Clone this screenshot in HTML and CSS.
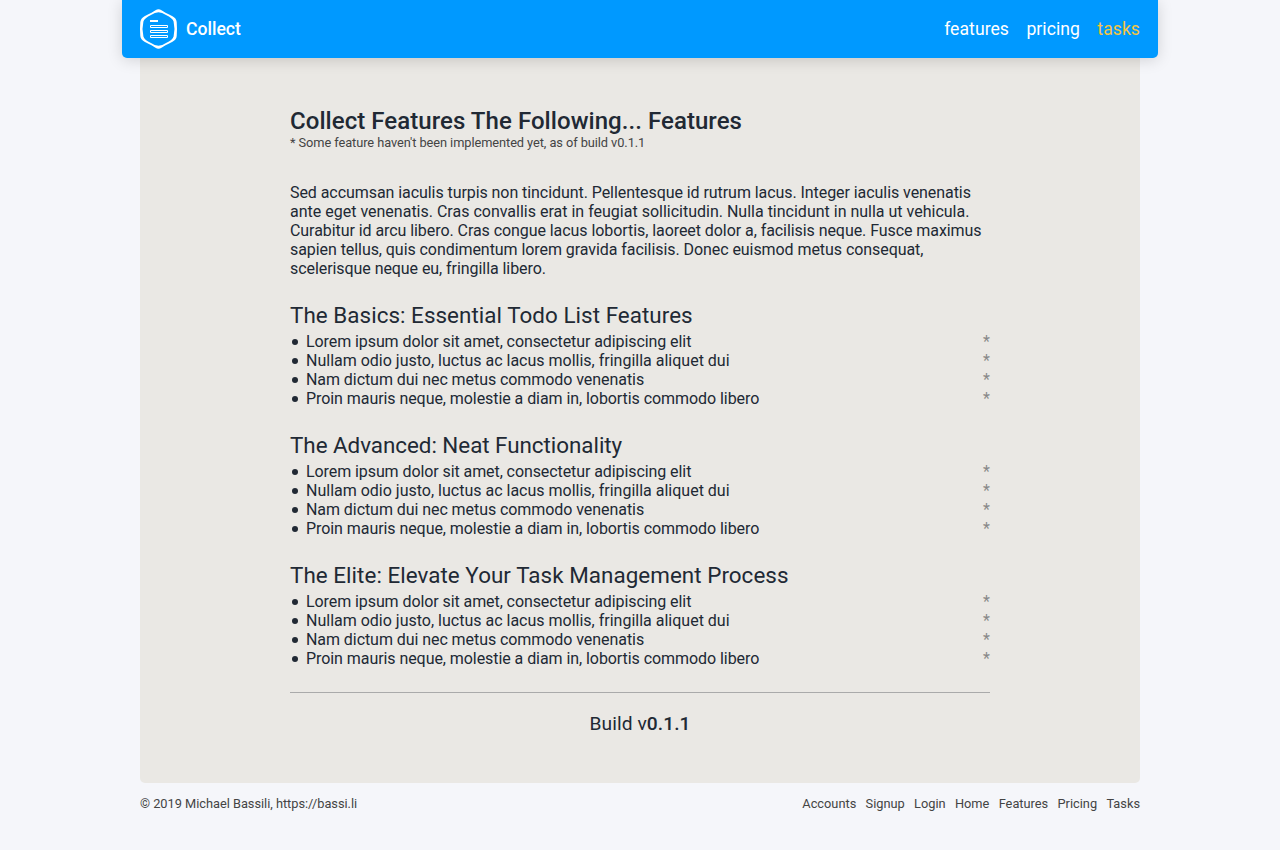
FILE: index.html
```html
<!DOCTYPE html>
<html lang="en">
<head>
<meta charset="utf-8">
<title>Collect</title>
<link rel="stylesheet" href="styles.css">
</head>
<body>
<header class="navbar">
  <a class="brand">
    <svg class="logo" viewBox="0 0 38 40">
      <path fill="#fff" fill-rule="evenodd" d="M15.500 1.200Q18.500-.8 21.500 1.200Q24 3 32.500 7.200Q36.500 9.500 36.700 13Q37.300 20 36.700 27Q36.500 30.500 32.500 32.800Q24 37 21.500 38.800Q18.500 40.800 15.500 38.800Q13 37 4.500 32.800Q.7 30.500 .3 27Q-.3 20 .3 13Q.7 9.500 4.500 7.200Q13 3 15.500 1.200ZM18.500 3.200Q15 3.200 11 6Q4.500 9 3.400 12.500Q1.600 20 3.400 27.500Q4.500 31 11 34Q15 36.800 18.500 36.800Q22 36.800 26 34Q32.500 31 33.600 27.500Q35.400 20 33.600 12.500Q32.500 9 26 6Q22 3.200 18.500 3.200Z"/>
      <path fill="#fff" d="M10 11H18V13H10Z"/>
      <path fill="none" stroke="#fff" d="M10.500 16.500H27.500V18.500H10.500ZM10.500 21.500H27.500V23.500H10.500ZM10.500 26.500H27.500V28.500H10.500Z"/>
    </svg>
    <span>Collect</span>
  </a>
  <nav class="nav-links"><a>features</a><a>pricing</a><a class="active">tasks</a></nav>
</header>
<main class="page">
  <div class="content">
    <h1>Collect Features The Following... Features</h1>
    <p class="note">* Some feature haven't been implemented yet, as of build v0.1.1</p>
    <p class="intro">Sed accumsan iaculis turpis non tincidunt. Pellentesque id rutrum lacus. Integer iaculis venenatis <span class="normal">ante eget venenatis. Cras convallis erat in feugiat sollicitudin. Nulla tincidunt in nulla ut vehicula.</span> Curabitur id arcu libero. Cras congue lacus lobortis, laoreet dolor a, facilisis neque. Fusce maximus sapien tellus, quis condimentum lorem gravida facilisis. Donec euismod metus consequat, scelerisque neque eu, fringilla libero.</p>
    <h2>The Basics: Essential Todo List Features</h2>
    <ul>
      <li>Lorem ipsum dolor sit amet, consectetur adipiscing elit<span class="star">*</span></li>
      <li>Nullam odio justo, luctus ac lacus mollis, fringilla aliquet dui<span class="star">*</span></li>
      <li>Nam dictum dui nec metus commodo venenatis<span class="star">*</span></li>
      <li>Proin mauris neque, molestie a diam in, lobortis commodo libero<span class="star">*</span></li>
    </ul>
    <h2 class="advanced">The Advanced: Neat Functionality</h2>
    <ul>
      <li>Lorem ipsum dolor sit amet, consectetur adipiscing elit<span class="star">*</span></li>
      <li>Nullam odio justo, luctus ac lacus mollis, fringilla aliquet dui<span class="star">*</span></li>
      <li>Nam dictum dui nec metus commodo venenatis<span class="star">*</span></li>
      <li>Proin mauris neque, molestie a diam in, lobortis commodo libero<span class="star">*</span></li>
    </ul>
    <h2>The Elite: Elevate Your Task Management Process</h2>
    <ul>
      <li>Lorem ipsum dolor sit amet, consectetur adipiscing elit<span class="star">*</span></li>
      <li>Nullam odio justo, luctus ac lacus mollis, fringilla aliquet dui<span class="star">*</span></li>
      <li>Nam dictum dui nec metus commodo venenatis<span class="star">*</span></li>
      <li>Proin mauris neque, molestie a diam in, lobortis commodo libero<span class="star">*</span></li>
    </ul>
    <p class="build">Build v<b>0.1.1</b></p>
  </div>
</main>
<footer class="footer">
  <span>© 2019 Michael Bassili, https://bassi.li</span>
  <nav class="footer-links"><a>Accounts</a><a>Signup</a><a>Login</a><a>Home</a><a>Features</a><a>Pricing</a><a>Tasks</a></nav>
</footer>
</body>
</html>
```
FILE: styles.css
```css
* { box-sizing: border-box; margin: 0; padding: 0; }
body { background: #f5f6fa; color: #212934; font: 16px/19px Roboto, sans-serif; }
.navbar { position: relative; width: 1036px; height: 58px; margin: 0 auto; padding: 0 18px; display: flex; align-items: center; justify-content: space-between; background: #0099ff; border-radius: 0 0 5px 5px; box-shadow: 0 2px 15px rgba(0, 0, 0, .15); color: #fff; font-size: 17.6px; }
.brand { display: flex; align-items: center; gap: 8px; font-weight: 500; }
.logo { width: 38px; height: 40px; overflow: visible; }
.nav-links { display: flex; gap: 17.4px; letter-spacing: .05px; }
.active { color: #f4c542; }
.page { width: 1000px; height: 725px; margin: 0 auto; padding-top: 49px; background: #eae8e4; border-radius: 0 0 5px 5px; }
.content { width: 700px; margin: 0 auto; }
h1 { font-size: 24px; line-height: 28px; font-weight: 500; letter-spacing: .06px; }
.note { font-size: 12.8px; line-height: 15px; color: #444; letter-spacing: -.07px; }
.intro { margin-top: 33px; letter-spacing: -.065px; }
.normal { letter-spacing: 0; }
h2 { font-size: 22.4px; line-height: 26px; font-weight: 400; margin-top: 24px; margin-bottom: 4px; letter-spacing: .05px; }
.advanced { letter-spacing: -.03px; }
ul { list-style: none; }
li { display: flex; padding-left: 16px; position: relative; letter-spacing: -.065px; }
li:nth-child(1) { letter-spacing: -.083px; }
li:nth-child(2) { letter-spacing: 0; }
li::before { content: ""; position: absolute; left: 2px; top: 7px; width: 6px; height: 6px; border-radius: 50%; background: #212934; }
.star { margin-left: auto; color: #888; letter-spacing: 0; }
.build { margin-top: 24px; padding-top: 20px; border-top: 1px solid #aaa; text-align: center; font-size: 19.2px; line-height: 22px; letter-spacing: .08px; }
.build b { font-weight: 500; }
.footer { width: 1000px; margin: 13px auto 0; display: flex; justify-content: space-between; font-size: 12.8px; line-height: 15px; color: #444; letter-spacing: -.02px; }
.footer-links { display: flex; gap: 9.3px; letter-spacing: 0; }
```
